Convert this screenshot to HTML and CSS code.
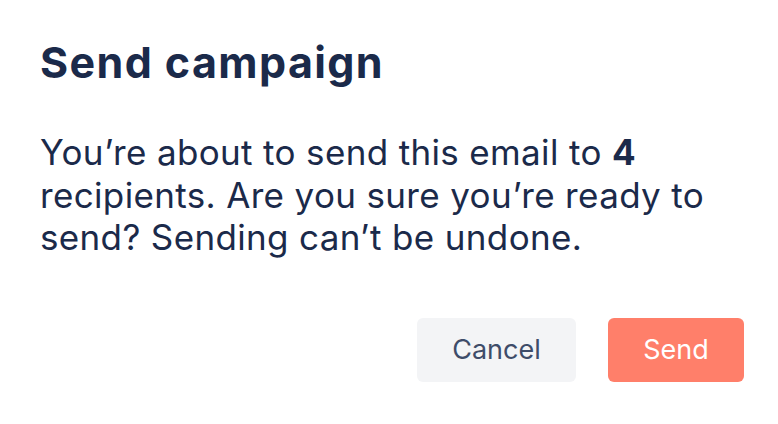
FILE: index.html
```html
<!DOCTYPE html>
<html lang="en">
<head>
    <meta charset="UTF-8">
    <meta name="viewport" content="width=device-width, initial-scale=1.0">
    <title>Send campaign</title>
    <link rel="stylesheet" href="styles.css">
</head>
<body>
    <div class="dialog">
        <h1 class="title">Send campaign</h1>
        <p class="message">You’re about to send this email to <b>4</b> recipients. Are you sure you’re ready to send? Sending can’t be undone.</p>
        <div class="actions">
            <button class="btn cancel">Cancel</button>
            <button class="btn send">Send</button>
        </div>
    </div>
</body>
</html>
```

FILE: styles.css
```css
body {
    margin: 0;
    background: #ffffff;
    font-family: Inter, "Noto Sans", sans-serif;
    color: #1b2a4a;
}
.dialog {
    padding: 37px 34px 0 40px;
}
.title {
    margin: 0;
    font-size: 43px;
    font-weight: 700;
    line-height: 50px;
    letter-spacing: 1.4px;
}
.message {
    margin: 44px 0 0;
    font-size: 35px;
    line-height: 42.5px;
    letter-spacing: 0.35px;
    max-width: 690px;
}
.message b {
    font-weight: 700;
}
.actions {
    display: flex;
    justify-content: flex-end;
    gap: 32px;
    margin-top: 59px;
}
.btn {
    height: 64px;
    border: none;
    border-radius: 6px;
    font-family: inherit;
    font-size: 27px;
    cursor: pointer;
}
.cancel {
    width: 159px;
    background: #f3f4f6;
    color: #3e4c69;
}
.send {
    width: 136px;
    background: #ff7f6a;
    color: #ffffff;
}
```
